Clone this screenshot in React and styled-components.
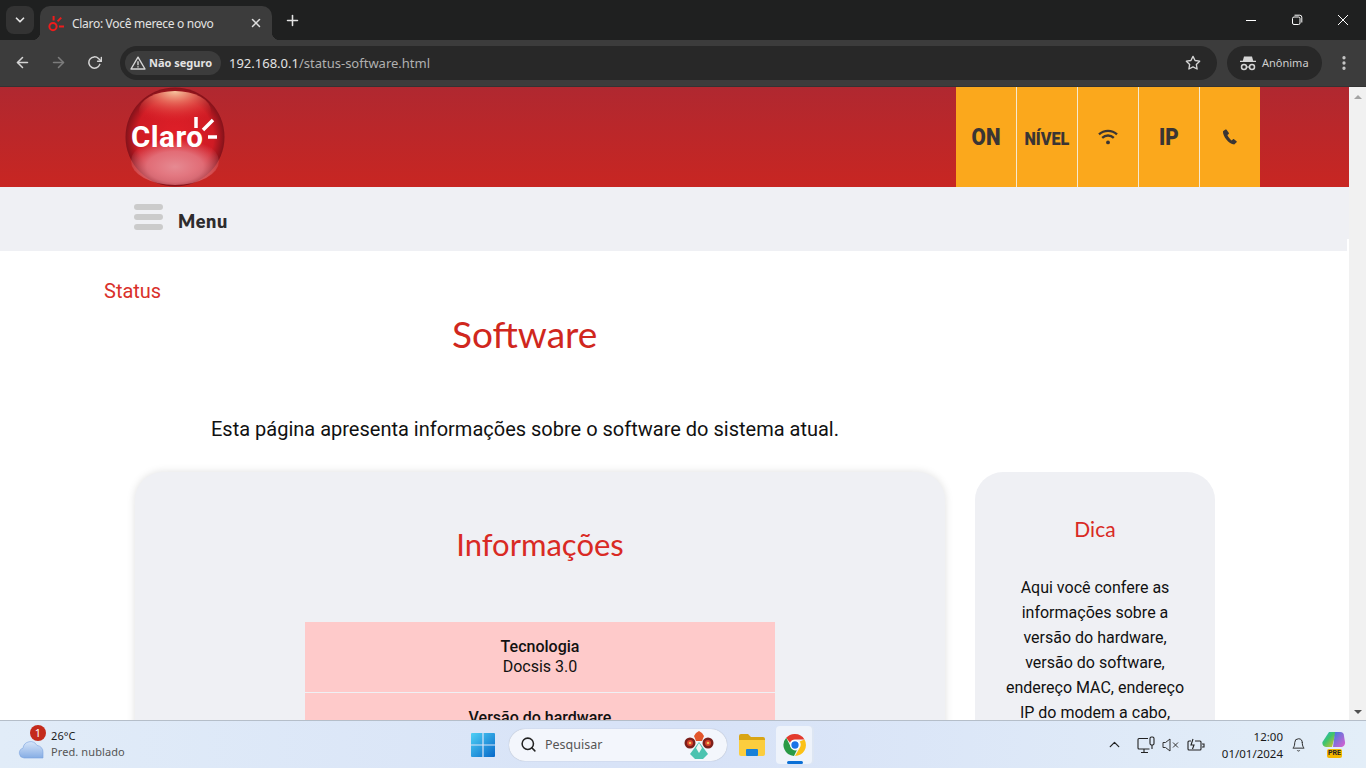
import React from 'react';
import styled, { createGlobalStyle } from 'styled-components';
import { FiArrowLeft, FiArrowRight, FiRotateCw, FiStar, FiX, FiPlus, FiChevronDown, FiChevronUp, FiBell, FiSearch, FiMoreVertical } from 'react-icons/fi';

const GlobalStyle = createGlobalStyle`
	html, body {
		margin: 0;
		padding: 0;
		height: 768px;
		overflow: hidden;
		background: #fff;
	}
	* {
		box-sizing: border-box;
	}
`;

const UI = "'Noto Sans', 'Open Sans', sans-serif";
const BODY = "Roboto, sans-serif";
const TITLE = "Lato, sans-serif";

function App() {
	return (
		<Screen>
			<GlobalStyle />
			<TabStrip>
				<TabList>
					<FiChevronDown size={14} strokeWidth={3} />
				</TabList>
				<Tab>
					<svg width="17" height="17" viewBox="0 0 17 17" fill="none" stroke="#ee1c1c" strokeWidth="2">
						<circle cx="5" cy="11.6" r="3.6" />
						<path d="M5.600 1v4.600M9.600 6.400l3.600-3.800M11 11.400h5" />
					</svg>
					<TabTitle>Claro: Você merece o novo</TabTitle>
					<FiX size={14} strokeWidth={2.6} color="#dedede" />
				</Tab>
				<NewTab>
					<FiPlus size={17} strokeWidth={2.2} />
				</NewTab>
				<WindowControls>
					<WinButton>
						<svg width="12" height="12" viewBox="0 0 12 12" stroke="#fff" fill="none"><path d="M1 6.500h10" /></svg>
					</WinButton>
					<WinButton>
						<svg width="12" height="12" viewBox="0 0 12 12" stroke="#fff" fill="none">
							<rect x="1.500" y="3" width="7.500" height="7.500" rx="1.500" />
							<path d="M3.500 1.200h5.300a2 2 0 0 1 2 2v5.300" />
						</svg>
					</WinButton>
					<WinButton>
						<svg width="12" height="12" viewBox="0 0 12 12" stroke="#fff" fill="none"><path d="M1 1l10 10M11 1L1 11" /></svg>
					</WinButton>
				</WindowControls>
			</TabStrip>

			<Toolbar>
				<NavIcon><FiArrowLeft size={17} strokeWidth={2.2} /></NavIcon>
				<NavIcon dim><FiArrowRight size={17} strokeWidth={2.2} /></NavIcon>
				<NavIcon><FiRotateCw size={15} strokeWidth={2.4} /></NavIcon>
				<Omnibox>
					<SecurityChip>
						<svg width="16" height="14" viewBox="0 0 16 14" fill="none" stroke="#d5d5d5" strokeWidth="1.400">
							<path d="M8 1.200L15 13H1z" strokeLinejoin="round" />
							<path d="M8 5.200v4M8 10.200v1.200" />
						</svg>
						Não seguro
					</SecurityChip>
					<Url>192.168.0.1<UrlPath>/status-software.html</UrlPath></Url>
					<StarIcon><FiStar size={16} strokeWidth={2} /></StarIcon>
				</Omnibox>
				<IncognitoChip>
					<svg width="18" height="18" viewBox="0 0 18 18" fill="#d5d5d5">
						<path d="M5 2.500h8l1.200 4.200H17V8H1V6.700h2.800z" />
						<circle cx="5" cy="13" r="2.500" fill="none" stroke="#d5d5d5" strokeWidth="1.500" />
						<circle cx="13" cy="13" r="2.500" fill="none" stroke="#d5d5d5" strokeWidth="1.500" />
						<path d="M7.500 12.400h3v1.200h-3z" />
					</svg>
					Anônima
				</IncognitoChip>
				<MenuDots><FiMoreVertical size={18} strokeWidth={2.4} /></MenuDots>
			</Toolbar>

			<Browser>
				<Viewport>
					<Header>
						<ClaroLogo />
						<StatusTiles>
							<StatusTile><TileText>ON</TileText></StatusTile>
							<StatusTile small><TileText>NÍVEL</TileText></StatusTile>
							<StatusTile>
								<svg width="20" height="16" viewBox="0 0 20 16" fill="none" stroke="#3a3534" strokeWidth="2.300">
									<path d="M1 5.400a13 13 0 0 1 18 0M4.200 8.800a8.400 8.400 0 0 1 11.600 0" />
									<circle cx="10" cy="13.400" r="1.900" fill="#3a3534" stroke="none" />
								</svg>
							</StatusTile>
							<StatusTile><TileText>IP</TileText></StatusTile>
							<StatusTile>
								<svg width="16" height="16" viewBox="0 0 16 16" fill="#3a3534">
									<path d="M3.400.6L1 2.200c-.5 4.800 5.800 13 11.200 13.200l2.400-2.200c.3-.3.3-.7 0-1l-2.600-2c-.3-.2-.7-.2-1 0l-1.300 1.200C8.300 10.600 6 7.800 5.400 6l1.300-1c.3-.3.4-.7.2-1L4.600.8C4.300.4 3.800.3 3.400.6z" />
								</svg>
							</StatusTile>
						</StatusTiles>
					</Header>
					<MenuBar>
						<Burger>
							<BurgerLine />
							<BurgerLine />
							<BurgerLine />
						</Burger>
						<MenuLabel>Menu</MenuLabel>
					</MenuBar>

					<Breadcrumb>Status</Breadcrumb>
					<PageTitle>Software</PageTitle>
					<Intro>Esta página apresenta informações sobre o software do sistema atual.</Intro>

					<Columns>
						<MainCard>
							<CardTitle>Informações</CardTitle>
							<InfoTable>
								<InfoRow>
									<InfoLabel>Tecnologia</InfoLabel>
									<span>Docsis 3.0</span>
								</InfoRow>
								<InfoRow>
									<InfoLabel>Versão do hardware</InfoLabel>
								</InfoRow>
							</InfoTable>
						</MainCard>
						<TipCard>
							<TipTitle>Dica</TipTitle>
							<TipText>
								Aqui você confere as informações sobre a versão do hardware, versão do software, endereço MAC, endereço IP do modem a cabo,
							</TipText>
						</TipCard>
					</Columns>
				</Viewport>
				<Scrollbar>
					<ArrowUp />
					<ArrowDown />
				</Scrollbar>
			</Browser>

			<Taskbar>
				<Weather>
					<WeatherIcon>
						<svg width="26" height="20" viewBox="0 0 26 20">
							<defs>
								<linearGradient id="cloud" x1="0" y1="0" x2="0" y2="1">
									<stop offset="0" stopColor="#d6e5f9" />
									<stop offset="1" stopColor="#86ade4" />
								</linearGradient>
							</defs>
							<path d="M6 19a5 5 0 0 1-1-9.800A7.500 7.500 0 0 1 19 6.500 6.300 6.300 0 0 1 25 13v6z" fill="url(#cloud)" stroke="#7aa3df" strokeWidth="0.600" />
						</svg>
						<Badge>1</Badge>
					</WeatherIcon>
					<WeatherText>
						<span>26°C</span>
						<WeatherSub>Pred. nublado</WeatherSub>
					</WeatherText>
				</Weather>

				<StartIcon>
					<svg width="24" height="24" viewBox="0 0 24 24">
						<defs>
							<linearGradient id="win" x1="0" y1="0" x2="1" y2="1">
								<stop offset="0" stopColor="#4fd0f5" />
								<stop offset="1" stopColor="#0668c9" />
							</linearGradient>
						</defs>
						<path d="M1 0h10.400v11.400H0V1a1 1 0 0 1 1-1zM12.600 0H23a1 1 0 0 1 1 1v10.400H12.600zM0 12.600h11.400V24H1a1 1 0 0 1-1-1zM12.600 12.600H24V23a1 1 0 0 1-1 1H12.600z" fill="url(#win)" />
					</svg>
				</StartIcon>
				<SearchBox>
					<FiSearch size={17} strokeWidth={2.2} color="#222" />
					<SearchLabel>Pesquisar</SearchLabel>
					<svg width="30" height="28" viewBox="0 0 30 28">
						<path d="M15 0l3 2 2 3-2 5h-6l-2-5 2-3z" fill="#e2562c" />
						<circle cx="6" cy="12" r="5.500" fill="#7c1f1a" />
						<circle cx="24" cy="12" r="5.500" fill="#7c1f1a" />
						<circle cx="6" cy="12" r="3" fill="#d8402a" />
						<circle cx="24" cy="12" r="3" fill="#d8402a" />
						<circle cx="6" cy="12" r="1.300" fill="#efc05a" />
						<circle cx="24" cy="12" r="1.300" fill="#efc05a" />
						<path d="M15 11l6 8 3 4-5 5h-8l-5-5 3-4z" fill="#4cc3b0" />
						<path d="M15 12l3 5-3 5-3-5z" fill="#eef7f4" />
					</svg>
				</SearchBox>
				<TaskIcon>
					<svg width="26" height="22" viewBox="0 0 26 22">
						<path d="M0 2a2 2 0 0 1 2-2h7l3 3h12a2 2 0 0 1 2 2v3H0z" fill="#d9a514" />
						<path d="M0 6h26v14a2 2 0 0 1-2 2H2a2 2 0 0 1-2-2z" fill="#fbcd3e" />
						<rect x="7" y="15" width="12" height="7" rx="1" fill="#1780d8" />
					</svg>
				</TaskIcon>
				<ActiveTask>
					<svg width="24" height="24" viewBox="0 0 24 24">
						<path d="M12 1a11 11 0 0 1 9.500 5.500H12a5.500 5.500 0 0 0-5 3.200L3.200 4.800A11 11 0 0 1 12 1z" fill="#e33b2e" />
						<path d="M21.500 6.500A11 11 0 0 1 12 23l4.700-8.200a5.500 5.500 0 0 0 0-6.300z" fill="#fbc116" />
						<path d="M3.200 4.800L7.800 14a5.500 5.500 0 0 0 6 3.300L11 23A11 11 0 0 1 3.200 4.800z" fill="#2a9a46" />
						<circle cx="12" cy="12" r="4.300" fill="#1a73e8" stroke="#fff" strokeWidth="1.300" />
					</svg>
					<ActiveMark />
				</ActiveTask>

				<Tray>
					<FiChevronUp size={17} strokeWidth={1.8} color="#222" />
					<TrayIcon>
						<svg width="18" height="18" viewBox="0 0 18 18" fill="none" stroke="#222" strokeWidth="1.100">
							<path d="M11 2.500H2a1 1 0 0 0-1 1V12a1 1 0 0 0 1 1h10.500M7 13v3M4 16.500h7" />
							<rect x="13" y="1" width="4" height="8" rx="1.500" />
							<path d="M15 9v4" />
						</svg>
					</TrayIcon>
					<TrayIcon>
						<svg width="18" height="14" viewBox="0 0 18 14" fill="none" stroke="#333" strokeWidth="1">
							<path d="M1 4.500h2.500L8 1v12L3.500 9.500H1zM11 4.500l5 5M16 4.500l-5 5" />
						</svg>
					</TrayIcon>
					<TrayIcon>
						<svg width="18" height="14" viewBox="0 0 18 14" fill="none" stroke="#222" strokeWidth="1.100">
							<path d="M4 3H2a1 1 0 0 0-1 1v7a1 1 0 0 0 1 1h11a1 1 0 0 0 1-1V4a1 1 0 0 0-1-1H8" />
							<path d="M15 6h2v3h-2M6 1L4 7h3l-1.500 4" />
						</svg>
					</TrayIcon>
					<Clock>
						<span>12:00</span>
						<span>01/01/2024</span>
					</Clock>
					<BellSlot><FiBell size={16} strokeWidth={1.5} color="#222" /></BellSlot>
					<Copilot>
						<svg width="24" height="22" viewBox="0 0 24 22">
							<defs>
								<linearGradient id="cop" x1="0" y1="0" x2="1" y2="1">
									<stop offset="0" stopColor="#22b5d8" />
									<stop offset="0.45" stopColor="#3fc46a" />
									<stop offset="1" stopColor="#f0c020" />
								</linearGradient>
								<linearGradient id="cop2" x1="0" y1="0" x2="1" y2="1">
									<stop offset="0" stopColor="#3a7be0" />
									<stop offset="1" stopColor="#e060d0" />
								</linearGradient>
							</defs>
							<path d="M7 0h7l-4 15H4a4 4 0 0 1-3.500-5z" fill="url(#cop)" />
							<path d="M13 0h5a4 4 0 0 1 4 4l1 6c.5 3-2 5-4 5h-8z" fill="url(#cop2)" />
						</svg>
						<PreTag>PRE</PreTag>
					</Copilot>
				</Tray>
			</Taskbar>
		</Screen>
	);
}

function ClaroLogo() {
	return (
		<svg width="100" height="100" viewBox="0 0 100 100">
			<defs>
				<radialGradient id="ball" cx="50%" cy="50%" r="50%">
					<stop offset="0" stopColor="#e01f28" />
					<stop offset="0.78" stopColor="#cf1b24" />
					<stop offset="1" stopColor="#84121a" />
				</radialGradient>
				<radialGradient id="shineTop" cx="50%" cy="0%" r="80%">
					<stop offset="0" stopColor="#f8c8a0" />
					<stop offset="0.35" stopColor="#e9705f" stopOpacity="0.9" />
					<stop offset="1" stopColor="#e01f28" stopOpacity="0" />
				</radialGradient>
				<radialGradient id="shineBottom" cx="50%" cy="62%" r="58%">
					<stop offset="0" stopColor="#e68a92" />
					<stop offset="0.55" stopColor="#e5808a" stopOpacity="0.8" />
					<stop offset="1" stopColor="#e5808a" stopOpacity="0" />
				</radialGradient>
			</defs>
			<circle cx="50" cy="50" r="49.500" fill="url(#ball)" />
			<ellipse cx="50" cy="24" rx="36" ry="20" fill="url(#shineTop)" />
			<ellipse cx="50" cy="74" rx="44" ry="24" fill="url(#shineBottom)" />
			<text x="6" y="60" fontFamily="Roboto, sans-serif" fontSize="29.5" fontWeight="700" fill="#fff" letterSpacing="0.500">Claro</text>
			<path d="M71 30v11M78 43l10-10M83 50h9" stroke="#fff" strokeWidth="3.500" fill="none" />
		</svg>
	);
}

const Screen = styled.div`
	width: 1366px;
	height: 768px;
	display: flex;
	flex-direction: column;
	overflow: hidden;
`;

const TabStrip = styled.div`
	height: 40px;
	flex: none;
	display: flex;
	align-items: flex-start;
	background: #1f2020;
	padding: 6px 0 0 6px;
`;
const TabList = styled.div`
	width: 28px;
	height: 28px;
	border-radius: 8px;
	background: #333;
	color: #e3e3e3;
	display: flex;
	align-items: center;
	justify-content: center;
`;
const Tab = styled.div`
	position: relative;
	margin-left: 6px;
	width: 232px;
	height: 34px;
	background: #3c3c3c;
	border-radius: 10px 10px 0 0;
	display: flex;
	align-items: center;
	padding: 0 9px 0 8px;
	&::before,
	&::after {
		content: '';
		position: absolute;
		bottom: 0;
		width: 8px;
		height: 8px;
	}
	&::before {
		left: -8px;
		background: radial-gradient(circle at 0 0, transparent 8px, #3c3c3c 8.5px);
	}
	&::after {
		right: -8px;
		background: radial-gradient(circle at 100% 0, transparent 8px, #3c3c3c 8.5px);
	}
`;
const TabTitle = styled.span`
	flex: 1;
	margin-left: 7px;
	font: 12px ${UI};
	letter-spacing: -0.3px;
	color: #e3e3e3;
	white-space: nowrap;
	overflow: hidden;
`;
const NewTab = styled.div`
	width: 28px;
	height: 28px;
	margin-left: 6px;
	color: #e3e3e3;
	display: flex;
	align-items: center;
	justify-content: center;
`;
const WindowControls = styled.div`
	margin-left: auto;
	margin-top: -6px;
	display: flex;
`;
const WinButton = styled.div`
	width: 46px;
	height: 40px;
	display: flex;
	align-items: center;
	justify-content: center;
`;

const Toolbar = styled.div`
	height: 47px;
	flex: none;
	display: flex;
	align-items: center;
	padding: 0 4px 1px 4px;
	background: #3c3c3c;
	border-bottom: 1px solid #333;
`;
const NavIcon = styled.div`
	width: 36px;
	height: 34px;
	color: ${(props) => (props.dim ? '#7c7c7c' : '#d5d5d5')};
	display: flex;
	align-items: center;
	justify-content: center;
`;
const Omnibox = styled.div`
	margin-left: 8px;
	width: 1097px;
	height: 34px;
	border-radius: 17px;
	background: #282828;
	display: flex;
	align-items: center;
	padding: 0 16px 0 5px;
`;
const SecurityChip = styled.div`
	width: 96px;
	height: 24px;
	border-radius: 12px;
	background: #3c3c3c;
	color: #e3e3e3;
	display: flex;
	align-items: center;
	gap: 3px;
	padding-left: 5px;
	font: 700 11px ${UI};
	white-space: nowrap;
`;
const Url = styled.span`
	margin-left: 8px;
	font: 13px ${UI};
	color: #e3e3e3;
`;
const UrlPath = styled.span`
	color: #b0b0b0;
`;
const StarIcon = styled.div`
	margin-left: auto;
	color: #d5d5d5;
	display: flex;
`;
const IncognitoChip = styled.div`
	margin-left: 10px;
	width: 95px;
	height: 34px;
	border-radius: 17px;
	background: #282828;
	color: #cfcfcf;
	display: flex;
	align-items: center;
	gap: 5px;
	padding-left: 12px;
	font: 11px ${UI};
`;
const MenuDots = styled.div`
	margin-left: 8px;
	width: 28px;
	color: #c8c8c8;
	display: flex;
	justify-content: center;
`;

const Browser = styled.div`
	flex: 1;
	min-height: 0;
	display: flex;
`;
const Viewport = styled.div`
	flex: 1;
	min-width: 0;
	overflow: hidden;
	background: #fff;
`;
const Scrollbar = styled.div`
	width: 17px;
	flex: none;
	background: #f1f1f1;
	display: flex;
	flex-direction: column;
	justify-content: space-between;
	align-items: center;
	padding: 8px 0 6px;
`;
const ArrowUp = styled.div`
	width: 0;
	height: 0;
	border-left: 4.5px solid transparent;
	border-right: 4.5px solid transparent;
	border-bottom: 4px solid #a3a3a3;
`;
const ArrowDown = styled.div`
	width: 0;
	height: 0;
	border-left: 4.5px solid transparent;
	border-right: 4.5px solid transparent;
	border-top: 4px solid #505050;
`;

const Header = styled.header`
	height: 100px;
	display: flex;
	align-items: stretch;
	justify-content: space-between;
	padding: 0 89px 0 125px;
	background: linear-gradient(#b02830, #c82622);
`;
const StatusTiles = styled.div`
	display: flex;
	gap: 1px;
	background: #f5e9d0;
`;
const StatusTile = styled.div`
	width: 60px;
	background: #fba81c;
	display: flex;
	align-items: center;
	justify-content: center;
	color: #3a3534;
	font-family: ${BODY};
	font-weight: 900;
	font-size: ${(props) => (props.small ? '18px' : '23px')};
	padding-top: ${(props) => (props.small ? '3px' : '0')};
`;
const TileText = styled.span`
	display: inline-block;
	transform: scaleX(0.9);
`;

const MenuBar = styled.div`
	position: relative;
	height: 64px;
	display: flex;
	align-items: center;
	padding-left: 134px;
	background: #eff0f4;
	&::after {
		content: '';
		position: absolute;
		right: 0;
		bottom: 0;
		width: 2px;
		height: 12px;
		background: #fff;
	}
`;
const Burger = styled.div`
	width: 29px;
	display: flex;
	flex-direction: column;
	gap: 4px;
	margin-top: -5px;
`;
const BurgerLine = styled.div`
	height: 6px;
	border-radius: 3px;
	background: #cbcbcb;
`;
const MenuLabel = styled.span`
	margin: 3px 0 0 15px;
	font: 800 18px ${TITLE};
	color: #2e2c2d;
	letter-spacing: 0.7px;
`;

const Breadcrumb = styled.div`
	margin: 29px 0 0 104px;
	font: 20px/22px ${BODY};
	color: #d9302a;
`;
const PageTitle = styled.h1`
	margin: 10px 0 0 452px;
	font: 400 37px/44px ${TITLE};
	color: #d0271d;
`;
const Intro = styled.p`
	margin: 59px 0 0 211px;
	font: 20px/28px ${BODY};
	color: #111;
`;
const Columns = styled.div`
	display: flex;
	align-items: flex-start;
	gap: 30px;
	margin: 29px 0 0 135px;
`;
const MainCard = styled.section`
	width: 810px;
	height: 600px;
	flex: none;
	padding-top: 52px;
	border-radius: 28px;
	background: #eff0f4;
	box-shadow: 0 0 8px rgba(0, 0, 0, 0.13);
`;
const CardTitle = styled.h2`
	margin: 0 0 58px;
	text-align: center;
	font: 400 31px/40px ${TITLE};
	color: #d92a24;
`;
const InfoTable = styled.div`
	width: 470px;
	margin: 0 auto;
	display: flex;
	flex-direction: column;
	gap: 1px;
`;
const InfoRow = styled.div`
	height: 70px;
	padding-top: 15px;
	display: flex;
	flex-direction: column;
	align-items: center;
	background: #fecaca;
	font: 16px/20px ${BODY};
	color: #111;
`;
const InfoLabel = styled.span`
	font-weight: 500;
`;
const TipCard = styled.aside`
	width: 240px;
	height: 600px;
	flex: none;
	padding-top: 43px;
	border-radius: 28px;
	background: #eff0f4;
`;
const TipTitle = styled.h3`
	margin: 0;
	text-align: center;
	font: 400 21px/28px ${TITLE};
	color: #d92a24;
`;
const TipText = styled.p`
	margin: 32px 25px 0;
	text-align: center;
	font: 16px/25px ${BODY};
	color: #111;
`;

const Taskbar = styled.div`
	height: 48px;
	flex: none;
	display: flex;
	align-items: center;
	border-top: 1px solid #b5bec9;
	background: linear-gradient(90deg, #e1ecf8, #d7e2f7 50%, #e3eef8);
`;
const Weather = styled.div`
	width: 471px;
	flex: none;
	display: flex;
	align-items: center;
	padding-left: 18px;
`;
const WeatherIcon = styled.div`
	position: relative;
	width: 26px;
	height: 20px;
	margin-top: 8px;
`;
const Badge = styled.div`
	position: absolute;
	top: -14px;
	left: 12px;
	width: 16px;
	height: 16px;
	border-radius: 50%;
	background: #c42b1c;
	color: #fff;
	font: 11px/16px ${UI};
	text-align: center;
`;
const WeatherText = styled.div`
	margin: -2px 0 0 7px;
	display: flex;
	flex-direction: column;
	font: 11px/16px ${UI};
	letter-spacing: 0.1px;
	color: #1a1a1a;
`;
const WeatherSub = styled.span`
	color: #555;
`;
const StartIcon = styled.div`
	width: 25px;
	display: flex;
`;
const SearchBox = styled.div`
	margin-left: 13px;
	width: 218px;
	height: 32px;
	border-radius: 16px;
	background: #f3f6fc;
	box-shadow: 0 0 1px rgba(0, 0, 0, 0.3);
	display: flex;
	align-items: center;
	padding: 0 13px 0 11px;
`;
const SearchLabel = styled.span`
	flex: 1;
	margin-left: 8px;
	font: 12.5px ${UI};
	color: #555;
`;
const TaskIcon = styled.div`
	margin-left: 12px;
	width: 26px;
	display: flex;
`;
const ActiveTask = styled.div`
	position: relative;
	margin-left: 11px;
	width: 36px;
	height: 38px;
	padding-left: 1px;
	border-radius: 4px;
	background: #eef3fb;
	box-shadow: 2px 0 0 #dde6f3;
	display: flex;
	align-items: center;
	justify-content: center;
`;
const ActiveMark = styled.div`
	position: absolute;
	bottom: 0;
	left: 11px;
	width: 16px;
	height: 3px;
	border-radius: 2px;
	background: #0a6fd6;
`;
const Tray = styled.div`
	margin-left: auto;
	display: flex;
	align-items: center;
	padding-right: 20px;
`;
const TrayIcon = styled.div`
	margin-left: 7px;
	width: 18px;
	display: flex;
	justify-content: center;
	&:first-of-type {
		margin-left: 14px;
	}
`;
const Clock = styled.div`
	margin-left: 16px;
	width: 62px;
	display: flex;
	flex-direction: column;
	align-items: flex-end;
	font: 11.5px/17px ${UI};
	white-space: nowrap;
	color: #1a1a1a;
`;
const BellSlot = styled.div`
	margin-left: 8px;
	width: 15px;
	display: flex;
`;
const Copilot = styled.div`
	position: relative;
	margin-left: 16px;
	width: 24px;
	height: 26px;
`;
const PreTag = styled.div`
	position: absolute;
	bottom: 0;
	left: 5px;
	padding: 0 1px;
	border-radius: 2px;
	background: #f5b800;
	color: #222;
	font: 700 7px/9px ${BODY};
`;

export default App;
